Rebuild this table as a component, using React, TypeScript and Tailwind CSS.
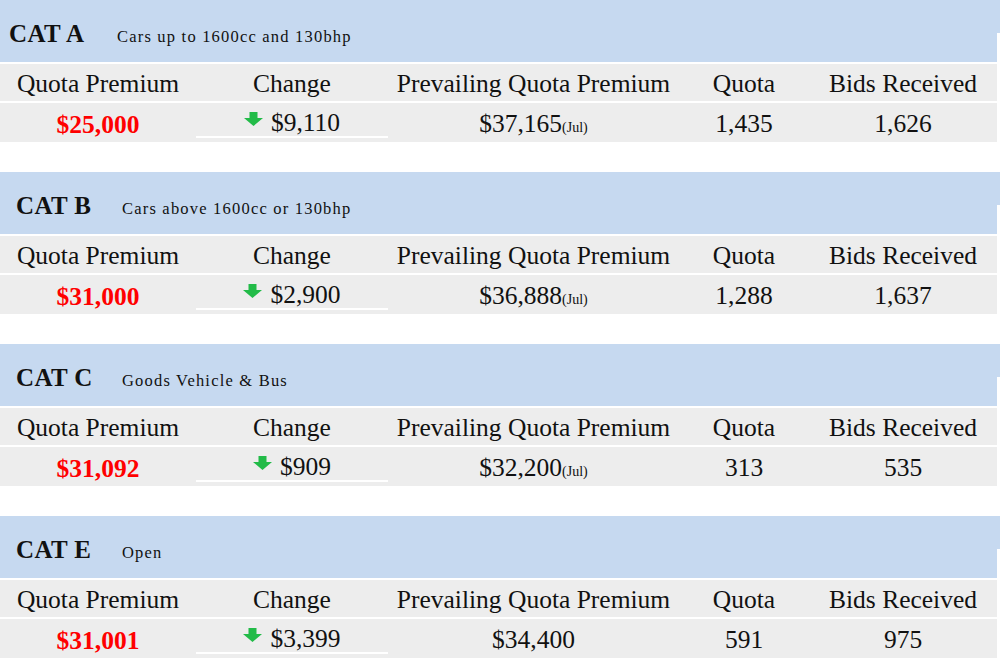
import React from "react";

type Cat = {
  code: string;
  desc: string;
  qp: string;
  change: string;
  prev: string;
  jul: boolean;
  quota: string;
  bids: string;
};

const cats: Cat[] = [
  { code: "CAT A", desc: "Cars up to 1600cc and 130bhp", qp: "$25,000", change: "$9,110", prev: "$37,165", jul: true, quota: "1,435", bids: "1,626" },
  { code: "CAT B", desc: "Cars above 1600cc or 130bhp", qp: "$31,000", change: "$2,900", prev: "$36,888", jul: true, quota: "1,288", bids: "1,637" },
  { code: "CAT C", desc: "Goods Vehicle & Bus", qp: "$31,092", change: "$909", prev: "$32,200", jul: true, quota: "313", bids: "535" },
  { code: "CAT E", desc: "Open", qp: "$31,001", change: "$3,399", prev: "$34,400", jul: false, quota: "591", bids: "975" },
];

function Arrow() {
  return (
    <svg width="19" height="14" viewBox="0 0 19 14" className="mr-[8px] mb-[9px] shrink-0">
      <path d="M5.5 0 H13.5 V6 H19 L9.5 14 L0 6 H5.5 Z" fill="#22bb48" />
    </svg>
  );
}

function Block({ c, first }: { c: Cat; first: boolean }) {
  return (
    <div className="flex flex-col h-[172px]">
      <div className="flex h-[62px]">
        <div className="flex-1 bg-[#c6d9f0] flex items-end pb-[16px]">
          <div className="flex items-baseline">
            <span className={`${first ? "pl-[9px]" : "pl-[16px]"} w-[117px] text-[25px] font-bold leading-none tracking-[0.4px] text-[#111]`}>
              {c.code}
            </span>
            <span className={`${first ? "pl-0" : "pl-[5px]"} text-[16.5px] leading-none tracking-[1.2px] text-[#111]`}>
              {c.desc}
            </span>
          </div>
        </div>
        <div className="w-[3px] flex flex-col">
          <div className="h-[33px] bg-[#c6d9f0]" />
        </div>
      </div>
      <div className="h-[2px]" />
      <div className="flex h-[37px] w-[997px] bg-[#ededed] items-center text-[25.5px] leading-none text-[#111] pt-[3px]">
        <div className="w-[196px] text-center">Quota Premium</div>
        <div className="w-[192px] text-center">Change</div>
        <div className="w-[291px] text-center">Prevailing Quota Premium</div>
        <div className="w-[130px] text-center">Quota</div>
        <div className="w-[188px] text-center">Bids Received</div>
      </div>
      <div className="h-[2px]" />
      <div className="flex h-[39px] w-[997px] bg-[#ededed] text-[25.5px] leading-none text-[#111]">
        <div className="w-[196px] flex items-center justify-center pt-[5px] font-bold text-[#ff0000]">{c.qp}</div>
        <div className="w-[192px] flex flex-col">
          <div className="h-[33px] flex items-end justify-center pb-[1px]">
            <Arrow />
            <span>{c.change}</span>
          </div>
          <div className="h-[2px] bg-white" />
        </div>
        <div className="w-[291px] flex items-end justify-center pb-[6px]">
          <span>{c.prev}</span>
          {c.jul && <span className="text-[14px] leading-none mb-[1px]">(Jul)</span>}
        </div>
        <div className="w-[130px] flex items-end justify-center pb-[6px]">{c.quota}</div>
        <div className="w-[188px] flex items-end justify-center pb-[6px]">{c.bids}</div>
      </div>
    </div>
  );
}

export default function App() {
  return (
    <div
      className="w-[1000px] h-[658px] overflow-hidden bg-white"
      style={{ fontFamily: '"Liberation Serif", "Times New Roman", serif' }}
    >
      {cats.map((c, i) => (
        <Block key={c.code} c={c} first={i === 0} />
      ))}
    </div>
  );
}
